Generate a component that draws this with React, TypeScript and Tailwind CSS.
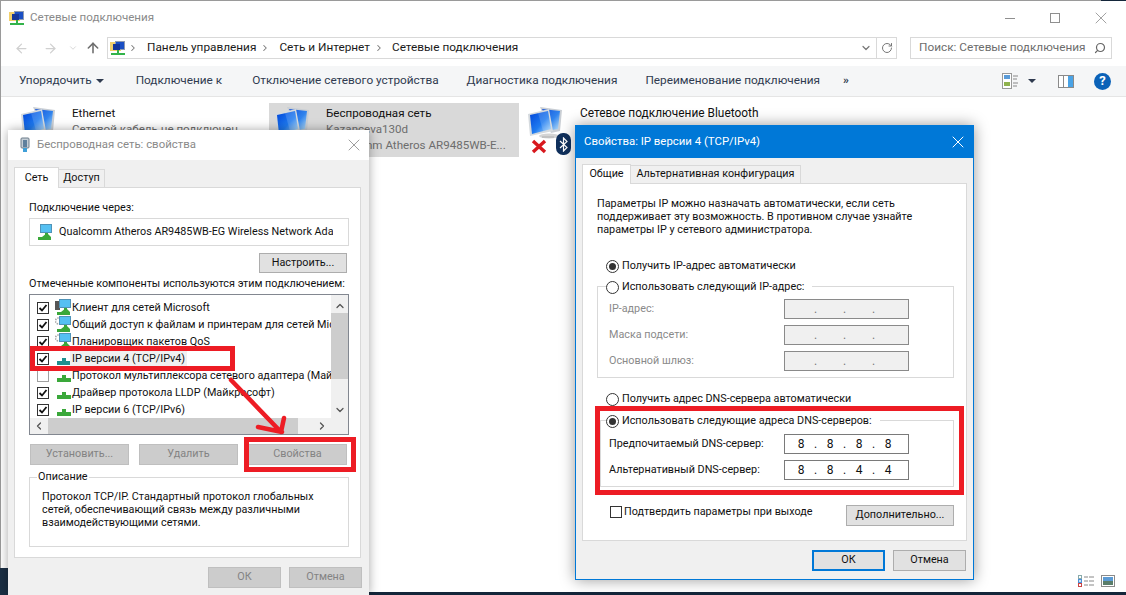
import React from "react";
import { ArrowLeft, ArrowRight, ArrowUp, ChevronDown, ChevronRight, RotateCw, Search, X } from "lucide-react";

const font = "font-['Roboto','Liberation_Sans',sans-serif]";

// big twin-screen network icon used by the explorer items
function NetIcon({ bluetooth }: { bluetooth?: boolean }) {
  return (
    <svg width="38" height="36" viewBox="0 0 38 36" className="shrink-0">
      <defs>
        <linearGradient id="scr" x1="0" y1="0" x2="1" y2="1">
          <stop offset="0" stopColor="#0044d8" />
          <stop offset="0.55" stopColor="#1f7bf0" />
          <stop offset="1" stopColor="#bfe6fb" />
        </linearGradient>
      </defs>
      <ellipse cx="22" cy="31" rx="10" ry="2.5" fill="#d4d4d4" />
      <polygon points="13,2 35,5 33,26 24,28" fill="#c9ced4" />
      <polygon points="15,4 33,6 31,24 25,25" fill="url(#scr)" opacity="0.9" />
      <polygon points="1,9 22,4 26,26 3,31" fill="#d5dade" />
      <polygon points="3,10 21,6 24,24 5,29" fill="url(#scr)" />
      <polygon points="11,8 21,6 24,24 16,26" fill="#ffffff" opacity="0.15" />
      {bluetooth && <rect x="15" y="31" width="12" height="2" fill="#c2c2c2" />}
    </svg>
  );
}

function SmallNet({ gear, pc, teal }: { gear?: boolean; pc?: boolean; teal?: boolean }) {
  const base = teal ? "#1f8f8f" : "#3aa83a";
  return (
    <svg width="17" height="17" viewBox="0 0 17 17" className="shrink-0">
      {pc && <rect x="0" y="2" width="5" height="9" fill="#555" />}
      {gear && <circle cx="3.5" cy="5" r="3" fill="none" stroke="#a8a8a8" strokeWidth="1.6" strokeDasharray="1.5 1" />}
      <rect x="4" y="0" width="12" height="9" fill="#4f93b8" />
      <rect x="5" y="1" width="10" height="7" fill="#55c0f2" />
      <rect x="9" y="9" width="3" height="3" fill={base} />
      <rect x="2" y="13" width="13" height="3" fill={base} />
      <polygon points="6,13 11,9 15,13" fill={base} />
    </svg>
  );
}

function ProtoIcon({ teal }: { teal?: boolean }) {
  const c = teal ? "#1f8f8f" : "#3aa83a";
  return (
    <svg width="17" height="17" viewBox="0 0 17 17" className="shrink-0">
      <polygon points="7,11 11,11 11,8 7,8" fill={c} />
      <rect x="2" y="11" width="14" height="4" fill={c} />
    </svg>
  );
}

function FolderNet({ size = 16 }: { size?: number }) {
  return (
    <svg width={size} height={size} viewBox="0 0 16 16" className="shrink-0">
      <rect x="0" y="2" width="11" height="9" fill="#f2d06b" />
      <rect x="5" y="1" width="10" height="9" fill="#8f9bb0" />
      <rect x="6" y="2" width="8" height="7" fill="#1a4fc4" />
      <rect x="3" y="4" width="7" height="6" fill="#16379a" />
      <rect x="7" y="10" width="2" height="3" fill="#32b34a" />
      <rect x="1" y="13" width="14" height="2" fill="#32b34a" />
    </svg>
  );
}

function Check({ on = true, muted }: { on?: boolean; muted?: boolean }) {
  return (
    <span className={"flex h-[12px] w-[12px] shrink-0 items-center justify-center border bg-white " + (muted ? "border-[#a0a0a0]" : "border-[#333]")}>
      {on && (
        <svg width="10" height="10" viewBox="0 0 10 10">
          <path d="M1.5 5 L4 7.5 L8.5 2" fill="none" stroke="#111" strokeWidth="1.8" />
        </svg>
      )}
    </span>
  );
}

function Radio({ on }: { on?: boolean }) {
  return (
    <span className="flex h-[13px] w-[13px] shrink-0 items-center justify-center rounded-full border border-[#333] bg-white">
      {on && <span className="h-[7px] w-[7px] rounded-full bg-[#333]" />}
    </span>
  );
}

function WinButton({ children, disabled, primary, className }: { children: React.ReactNode; disabled?: boolean; primary?: boolean; className?: string }) {
  return (
    <div
      className={
        "flex h-[21px] items-center justify-center text-[10.8px] " +
        (disabled
          ? "border border-[#bfbfbf] bg-[#cccccc] text-[#838383] "
          : primary
            ? "border-2 border-[#0078d7] bg-[#e1e1e1] text-[#111] "
            : "border border-[#adadad] bg-[#e1e1e1] text-[#111] ") +
        (className ?? "")
      }
    >
      {children}
    </div>
  );
}

function IpBox({ parts, disabled }: { parts: string[]; disabled?: boolean }) {
  return (
    <div className={"ml-auto mr-[44px] flex h-[20px] w-[125px] items-center border pl-[4px] text-[12px] " + (disabled ? "border-[#8a8a8a] bg-[#f0f0f0] text-[#777]" : "border-[#7a7a7a] bg-white text-[#111]")}>
      {parts.map((p, i) => (
        <React.Fragment key={i}>
          <span className="w-[24px] text-center">{p}</span>
          {i < 3 && <span className="w-[5px] text-center">.</span>}
        </React.Fragment>
      ))}
    </div>
  );
}

const components: { label: string; check: boolean; icon: React.ReactNode; selected?: boolean }[] = [
  { label: "Клиент для сетей Microsoft", check: true, icon: <SmallNet pc /> },
  { label: "Общий доступ к файлам и принтерам для сетей Microsoft", check: true, icon: <SmallNet gear /> },
  { label: "Планировщик пакетов QoS", check: true, icon: <SmallNet gear /> },
  { label: "IP версии 4 (TCP/IPv4)", check: true, icon: <ProtoIcon teal />, selected: true },
  { label: "Протокол мультиплексора сетевого адаптера (Майкрософт)", check: false, icon: <ProtoIcon /> },
  { label: "Драйвер протокола LLDP (Майкрософт)", check: true, icon: <ProtoIcon /> },
  { label: "IP версии 6 (TCP/IPv6)", check: true, icon: <ProtoIcon /> },
];

function Explorer() {
  return (
    <div className="flex h-[592px] flex-col border-l border-t border-[#9a9a9a] bg-white">
      {/* title */}
      <div className="flex h-[36px] shrink-0 items-center pb-[2px] pl-[8px]">
        <FolderNet />
        <span className="ml-[5px] text-[11.6px] text-[#8a8a8a]">Сетевые подключения</span>
        <div className="ml-auto flex items-center pr-[15px] text-[#8f8f8f]">
          <span className="h-px w-[10px] bg-[#8f8f8f]" />
          <span className="ml-[35px] h-[10px] w-[10px] border border-[#8f8f8f]" />
          <X size={20} strokeWidth={1} className="ml-[31px]" />
        </div>
      </div>
      {/* nav */}
      <div className="flex h-[22px] shrink-0 items-center">
        <ArrowLeft size={15} strokeWidth={2} className="ml-[13px] text-[#d0d0d0]" />
        <ArrowRight size={15} strokeWidth={2} className="ml-[14px] text-[#d0d0d0]" />
        <ChevronDown size={10} strokeWidth={2} className="ml-[10px] text-[#d0d0d0]" />
        <ArrowUp size={16} strokeWidth={2.4} className="ml-[7px] text-[#6f6f6f]" />
        <div className="ml-[6px] flex h-[22px] w-[790px] items-center border border-[#d9d9d9] pl-[2px] text-[11.8px] text-[#1a1a1a]">
          <FolderNet />
          <ChevronRight size={10} strokeWidth={2.5} className="ml-[2px] text-[#777]" />
          <span className="ml-[9px]">Панель управления</span>
          <ChevronRight size={10} strokeWidth={2.5} className="ml-[4px] text-[#777]" />
          <span className="ml-[9px]">Сеть и Интернет</span>
          <ChevronRight size={10} strokeWidth={2.5} className="ml-[4px] text-[#777]" />
          <span className="ml-[8px]">Сетевые подключения</span>
          <ChevronDown size={12} strokeWidth={2.4} className="ml-auto mr-[4px] text-[#777]" />
          <div className="flex h-full w-[20px] items-center justify-center border-l border-[#d9d9d9]">
            <RotateCw size={12} strokeWidth={2} className="text-[#777]" />
          </div>
        </div>
        <div className="ml-[13px] flex h-[22px] w-[202px] items-center border border-[#d9d9d9] pl-[8px] pr-[5px] text-[11.8px] text-[#6d6d6d]">
          <span>Поиск: Сетевые подключения</span>
          <Search size={12} strokeWidth={2.4} className="ml-auto -scale-x-100 text-[#666]" />
        </div>
      </div>
      {/* toolbar */}
      <div className="mt-[7px] flex h-[31px] shrink-0 items-center border-b border-[#e5e5e5] bg-[#f5f6f7] text-[11.8px] text-[#2f3a4f]">
        <span className="ml-[18px]">Упорядочить</span>
        <span className="ml-[4px] h-0 w-0 border-x-[4px] border-t-[4px] border-x-transparent border-t-[#2f3a4f]" />
        <span className="ml-[32px]">Подключение к</span>
        <span className="ml-[30px]">Отключение сетевого устройства</span>
        <span className="ml-[28px]">Диагностика подключения</span>
        <span className="ml-[28px]">Переименование подключения</span>
        <span className="ml-[23px] font-bold">»</span>
        <div className="ml-auto flex items-center pr-[15px]">
          <svg width="16" height="16" viewBox="0 0 16 16">
            <rect x="0.5" y="0.5" width="9" height="15" fill="#fff" stroke="#999" />
            <rect x="2" y="2" width="6" height="4" fill="#5a9bd8" />
            <rect x="2" y="9" width="6" height="4" fill="#8fb24d" />
            <path d="M11 3h5M11 6h4M11 10h5M11 13h4" stroke="#888" />
          </svg>
          <span className="ml-[10px] h-0 w-0 border-x-[4px] border-t-[4px] border-x-transparent border-t-[#2f3a4f]" />
          <svg width="16" height="13" viewBox="0 0 16 13" className="ml-[22px]">
            <rect x="0.5" y="0.5" width="15" height="12" fill="#fff" stroke="#8a8a8a" />
            <rect x="10" y="1" width="5" height="11" fill="#4aa3e6" />
            <path d="M5.5 1v11" stroke="#8a8a8a" />
          </svg>
          <span className="ml-[20px] flex h-[17px] w-[17px] items-center justify-center rounded-full bg-[#0b62b8] text-[13px] font-bold text-white">?</span>
        </div>
      </div>
      {/* items */}
      <div className="flex h-[60px] shrink-0 pt-[6px] text-[11.6px] leading-[16px]">
        <div className="flex w-[268px] pl-[19px]">
          <div className="pt-[2px]"><NetIcon /></div>
          <div className="ml-[14px] pt-[2px]">
            <div className="text-[#111]">Ethernet</div>
            <div className="text-[#6d6d6d]">Сетевой кабель не подключен</div>
          </div>
        </div>
        <div className="flex h-[54px] w-[250px] bg-[#d9d9d9] pl-[5px]">
          <div className="pt-[2px]"><NetIcon /></div>
          <div className="ml-[14px] pt-[2px]">
            <div className="text-[#111]">Беспроводная сеть</div>
            <div className="text-[#6d6d6d]">Kazanceva130d</div>
            <div className="whitespace-nowrap text-[#6d6d6d]">Qualcomm Atheros AR9485WB-E...</div>
          </div>
        </div>
        <div className="relative flex pl-[8px]">
          <div className="pt-[2px]"><NetIcon bluetooth /></div>
          <svg width="16" height="15" viewBox="0 0 16 15" className="absolute left-[12px] top-[36px]">
            <path d="M2 2 L14 13 M14 2 L2 13" stroke="#d8181e" strokeWidth="3.4" />
          </svg>
          <div className="absolute left-[37px] top-[30px] flex h-[22px] w-[15px] items-center justify-center rounded-[7px] bg-[#10305c]">
            <svg width="9" height="15" viewBox="0 0 9 15">
              <path d="M1 4 L8 10.5 L4.5 14 V1 L8 4.5 L1 11" fill="none" stroke="#fff" strokeWidth="1.2" />
            </svg>
          </div>
          <div className="ml-[15px] whitespace-nowrap pt-[2px]">
            <div className="text-[11.9px] text-[#111]">Сетевое подключение Bluetooth</div>
            <div className="text-[#6d6d6d]">Нет подключения</div>
          </div>
        </div>
      </div>
      {/* status bar icons */}
      <div className="mt-auto flex h-[18px] items-center justify-end gap-[7px] pb-[5px] pr-[11px]">
        <svg width="16" height="12" viewBox="0 0 16 12">
          <rect x="0.5" y="0.5" width="3" height="3" fill="#fff" stroke="#8aa" />
          <rect x="0.5" y="4.5" width="3" height="3" fill="#cfe3f5" stroke="#4a90d9" />
          <rect x="0.5" y="8.5" width="3" height="3" fill="#fff" stroke="#c44" />
          <path d="M6 2h4M11 2h5M6 6h4M11 6h5M6 10h4M11 10h5" stroke="#888" />
        </svg>
        <svg width="14" height="12" viewBox="0 0 14 12">
          <rect x="0.5" y="0.5" width="13" height="11" fill="#fff" stroke="#8a8a8a" />
          <rect x="2" y="2" width="10" height="4" fill="#5b9bd5" />
          <rect x="2" y="6" width="10" height="4" fill="#5a7d6a" />
        </svg>
      </div>
    </div>
  );
}

function NetworkDialog() {
  return (
    <div className="absolute left-[8px] top-[130px] flex h-[465px] w-[361px] flex-col bg-[#f0f0f0] shadow-[0_0_10px_rgba(0,0,0,0.35)]">
      <div className="flex h-[30px] shrink-0 items-center bg-white pl-[11px] pr-[5px]">
        <svg width="12" height="16" viewBox="0 0 12 16">
          <rect x="2" y="1" width="8" height="10" rx="1" fill="#c5ced6" stroke="#6d7c8a" />
          <rect x="4" y="3" width="4" height="7" fill="#5f7f9c" />
          <rect x="4" y="11" width="4" height="4" fill="#3f9fd8" />
        </svg>
        <span className="ml-[6px] text-[11.4px] text-[#8a8a8a]">Беспроводная сеть: свойства</span>
        <X size={20} strokeWidth={1} className="ml-auto text-[#8a8a8a]" />
      </div>
      <div className="flex h-[27px] shrink-0 items-end pl-[6px] text-[10.8px] text-[#111]">
        <div className="relative z-10 -mb-px flex h-[21px] w-[45px] items-center justify-center border border-b-0 border-[#d9d9d9] bg-white">Сеть</div>
        <div className="flex h-[18px] w-[46px] items-center justify-center border border-b-0 border-l-0 border-[#d9d9d9] bg-[#f0f0f0]">Доступ</div>
      </div>
      <div className="ml-[6px] flex h-[371px] w-[347px] shrink-0 flex-col border border-[#d9d9d9] bg-white pl-[14px] text-[10.8px] text-[#111]">
        <div className="mt-[12px] h-[16px] leading-[16px]">Подключение через:</div>
        <div className="mt-[2px] flex h-[28px] w-[320px] shrink-0 items-center overflow-hidden border border-[#d9d9d9] pl-[6px]">
          <SmallNet />
          <span className="ml-[6px] w-[274px] overflow-hidden whitespace-nowrap">Qualcomm Atheros AR9485WB-EG Wireless Network Adapter</span>
        </div>
        <WinButton className="ml-[230px] mt-[7px] !h-[20px] w-[88px] shrink-0">Настроить...</WinButton>
        <div className="mt-[3px] h-[16px] whitespace-nowrap leading-[16px]">Отмеченные компоненты используются этим подключением:</div>
        <div className="mt-[2px] flex h-[141px] w-[320px] shrink-0 flex-col border border-[#828790]">
          <div className="flex h-[123px] shrink-0">
            <div className="w-[301px] overflow-hidden pt-[4px]">
              {components.map((c) => (
                <div key={c.label} className="flex h-[17px] items-center pl-[7px]">
                  <Check on={c.check} muted={!c.check} />
                  <span className="ml-[6px] flex w-[17px] shrink-0">{c.icon}</span>
                  <span className={"ml-[-2px] whitespace-nowrap px-[2px] leading-[17px] " + (c.selected ? "bg-[#f0f0f0]" : "")}>{c.label}</span>
                </div>
              ))}
            </div>
            <div className="flex w-[17px] shrink-0 flex-col items-center bg-[#f0f0f0] text-[#555]">
              <ChevronDown size={12} strokeWidth={2.6} className="mt-[4px] h-[14px] rotate-180" />
              <div className="h-[66px] w-full bg-[#cdcdcd]" />
              <ChevronDown size={12} strokeWidth={2.6} className="mt-auto mb-[2px]" />
            </div>
          </div>
          <div className="flex h-[16px] shrink-0 items-center bg-[#f0f0f0] text-[#555]">
            <ChevronDown size={12} strokeWidth={2.6} className="ml-[3px] rotate-90" />
            <div className="ml-[3px] h-full w-[250px] bg-[#cdcdcd]" />
            <ChevronDown size={12} strokeWidth={2.6} className="ml-auto mr-[20px] -rotate-90" />
          </div>
        </div>
        <div className="ml-px mt-[9px] flex shrink-0 gap-[10px]">
          <WinButton disabled className="w-[99px]">Установить...</WinButton>
          <WinButton disabled className="w-[99px]">Удалить</WinButton>
          <WinButton disabled className="w-[99px]">Свойства</WinButton>
        </div>
        <div className="relative mt-[12px] h-[70px] w-[320px] shrink-0 border border-[#d9d9d9] pl-[12px] pt-[12px] leading-[13px]">
          <span className="absolute -top-[8px] left-[7px] bg-white px-px leading-[14px]">Описание</span>
          Протокол TCP/IP. Стандартный протокол глобальных
          <br />
          сетей, обеспечивающий связь между различными
          <br />
          взаимодействующими сетями.
        </div>
      </div>
      <div className="mt-[9px] flex justify-end gap-[8px] pr-[7px]">
        <WinButton disabled className="w-[73px]">ОК</WinButton>
        <WinButton disabled className="w-[73px]">Отмена</WinButton>
      </div>
    </div>
  );
}

function IpDialog() {
  const label = "pl-[11px]";
  return (
    <div className="absolute left-[575px] top-[125px] flex h-[455px] w-[399px] flex-col border border-[#0078d7] bg-[#f0f0f0] shadow-[0_0_14px_rgba(0,0,0,0.4)]">
      <div className="flex h-[32px] shrink-0 items-center bg-[#0078d7] pl-[8px] pr-[5px] text-white">
        <span className="text-[11.4px]">Свойства: IP версии 4 (TCP/IPv4)</span>
        <X size={20} strokeWidth={1.2} className="ml-auto" />
      </div>
      <div className="flex h-[25px] shrink-0 items-end pl-[6px] text-[10.8px] text-[#111]">
        <div className="relative z-10 -mb-px flex h-[20px] w-[49px] items-center justify-center border border-b-0 border-[#d9d9d9] bg-white">Общие</div>
        <div className="flex h-[18px] w-[170px] items-center justify-center whitespace-nowrap border border-b-0 border-l-0 border-[#d9d9d9] bg-[#f0f0f0]">Альтернативная конфигурация</div>
      </div>
      <div className="ml-[6px] flex h-[358px] w-[385px] shrink-0 flex-col border border-[#d9d9d9] bg-white text-[10.8px] text-[#111]">
        <div className="ml-[14px] mt-[13px] leading-[13px]">
          Параметры IP можно назначать автоматически, если сеть
          <br />
          поддерживает эту возможность. В противном случае узнайте
          <br />
          параметры IP у сетевого администратора.
        </div>
        <div className="ml-[23px] mt-[22px] flex h-[16px] items-center gap-[3px]"><Radio on />Получить IP-адрес автоматически</div>
        <div className="relative ml-[14px] mt-[12px] h-[92px] w-[357px] shrink-0 border border-[#d9d9d9] pt-[12px] text-[#8a8a8a]">
          <div className="absolute -top-[8px] left-[8px] flex h-[16px] items-center gap-[3px] bg-white pr-[8px] text-[#111]"><Radio />Использовать следующий IP-адрес:</div>
          <div className="flex flex-col gap-[6px]">
            <div className={"flex items-center " + label}>IP-адрес:<IpBox parts={["", "", "", ""]} disabled /></div>
            <div className={"flex items-center " + label}>Маска подсети:<IpBox parts={["", "", "", ""]} disabled /></div>
            <div className={"flex items-center " + label}>Основной шлюз:<IpBox parts={["", "", "", ""]} disabled /></div>
          </div>
        </div>
        <div className="ml-[23px] mt-[13px] flex h-[16px] items-center gap-[3px]"><Radio />Получить адрес DNS-сервера автоматически</div>
        <div className="relative ml-[17px] mt-[13px] h-[67px] w-[354px] shrink-0 border border-[#d9d9d9] pt-[13px]">
          <div className="absolute -top-[8px] left-[5px] flex h-[16px] items-center gap-[3px] bg-white pr-[8px]"><Radio on />Использовать следующие адреса DNS-серверов:</div>
          <div className="flex flex-col gap-[6px]">
            <div className="flex items-center pl-[8px]">Предпочитаемый DNS-сервер:<IpBox parts={["8", "8", "8", "8"]} /></div>
            <div className="flex items-center pl-[8px]">Альтернативный DNS-сервер:<IpBox parts={["8", "8", "4", "4"]} /></div>
          </div>
        </div>
        <div className="ml-[27px] mt-[18px] flex items-start">
          <div className="flex h-[14px] items-center gap-[2px]"><Check on={false} />Подтвердить параметры при выходе</div>
          <WinButton className="ml-auto mr-[12px] w-[108px]">Дополнительно...</WinButton>
        </div>
      </div>
      <div className="mt-[9px] flex justify-end gap-[8px] pr-[7px]">
        <WinButton primary className="w-[73px]">ОК</WinButton>
        <WinButton className="w-[73px]">Отмена</WinButton>
      </div>
    </div>
  );
}

// red markup drawn on top of the screenshot
function Annotations() {
  return (
    <>
      <div className="absolute left-[30px] top-[346px] h-[25px] w-[205px] border-[5px] border-[#ed1c24]" />
      <div className="absolute left-[244px] top-[437px] h-[35px] w-[112px] border-[5px] border-[#ed1c24]" />
      <div className="absolute left-[595px] top-[406px] h-[89px] w-[369px] border-[5px] border-[#ed1c24]" />
      <svg width="70" height="70" viewBox="0 0 70 70" className="absolute left-[225px] top-[372px]">
        <path d="M6 8 L56 60 M33 55 L57 60 M59 46 L56 60" fill="none" stroke="#ed1c24" strokeWidth="4.5" strokeLinecap="round" />
      </svg>
    </>
  );
}

export default function App() {
  return (
    <div className={"relative h-[595px] w-[1126px] overflow-hidden bg-[#14263a] " + font}>
      <Explorer />
      <div className="absolute right-0 top-0 h-px w-[25px] bg-[#14263a]" />
      <div className="absolute left-0 top-[568px] h-[27px] w-[8px] bg-[#1b2f44]" />
      <NetworkDialog />
      <IpDialog />
      <Annotations />
    </div>
  );
}
